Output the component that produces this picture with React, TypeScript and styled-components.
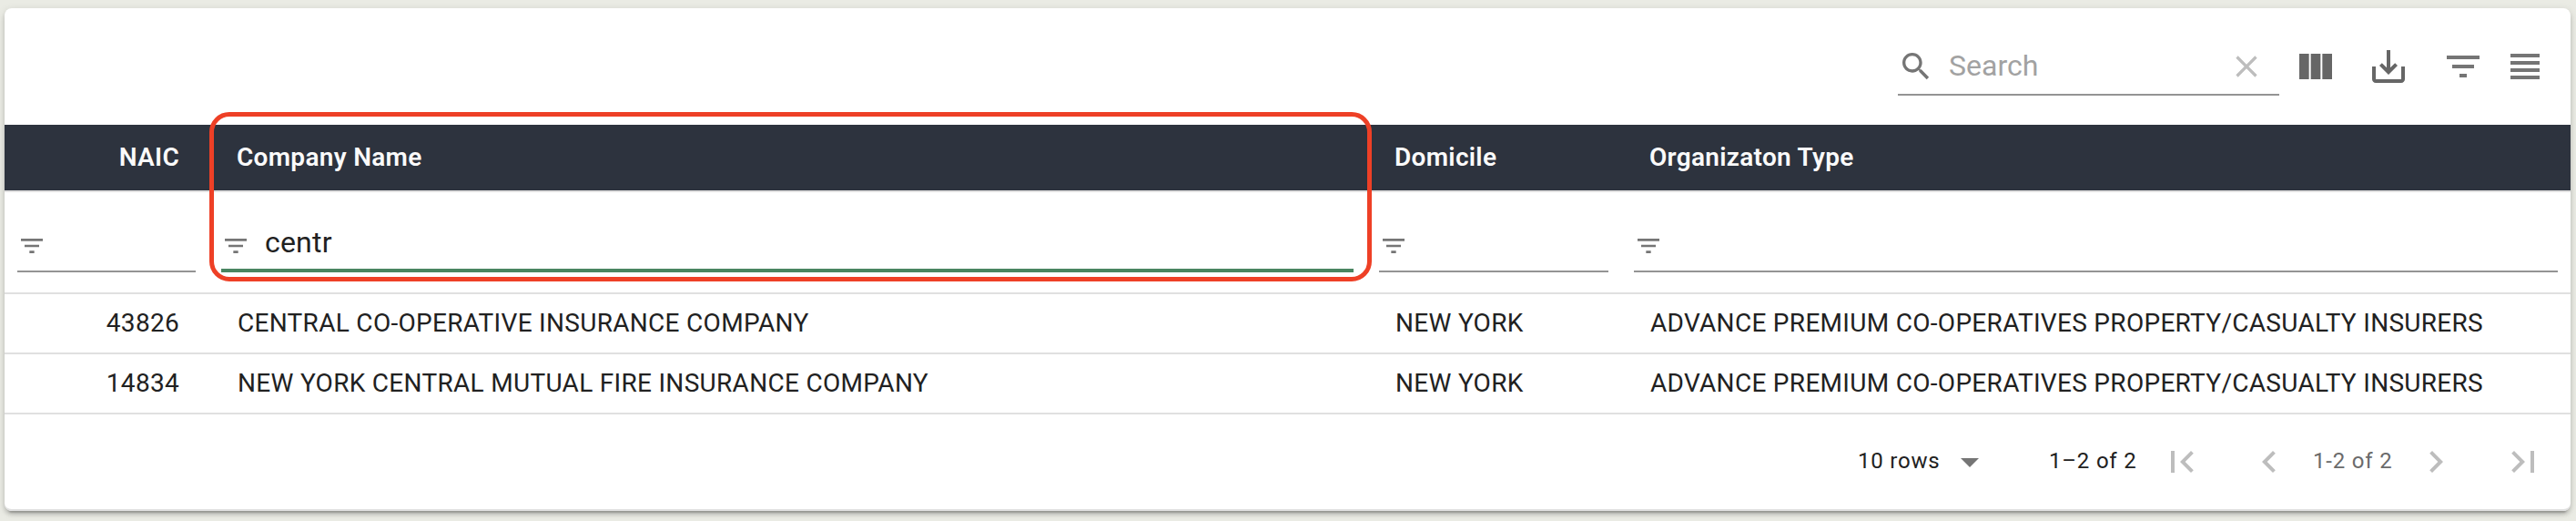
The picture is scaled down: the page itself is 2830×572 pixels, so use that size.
import React from "react";
import styled, { createGlobalStyle, css } from "styled-components";

const GlobalStyle = createGlobalStyle`
  * { box-sizing: border-box; }
  body {
    margin: 0;
    background: #eaebe4;
    font-family: Roboto, "Liberation Sans", sans-serif;
    color: #212121;
    overflow: hidden;
  }
`;

const Page = styled.main`
  width: 2830px;
  height: 572px;
  padding: 9px 6px 11px 5px;
`;

const Card = styled.section`
  position: relative;
  height: 552px;
  display: flex;
  flex-direction: column;
  background: #fff;
  border-radius: 8px;
  box-shadow:
    0 6px 2px -4px rgba(0, 0, 0, 0.2),
    0 4px 4px 0 rgba(0, 0, 0, 0.14),
    0 2px 10px 0 rgba(0, 0, 0, 0.12);
`;

const Toolbar = styled.header`
  height: 128px;
  display: flex;
  justify-content: flex-end;
  align-items: flex-start;
  padding: 40px 26px 0 0;
`;

const SearchField = styled.label`
  width: 419px;
  height: 56px;
  display: flex;
  align-items: flex-start;
  padding-top: 4px;
  margin-right: 16px;
  border-bottom: 2px solid #949494;
`;

const SearchInput = styled.input`
  flex: 1;
  min-width: 0;
  height: 38px;
  margin: 0 0 0 16px;
  padding: 0;
  border: 0;
  outline: 0;
  background: transparent;
  font: 400 32px/38px Roboto, sans-serif;
  color: #212121;
  &::placeholder { color: #a2a2a2; opacity: 1; }
`;

const IconButton = styled.button<{ $tone?: string; $gap?: number }>`
  flex: none;
  display: flex;
  padding: 0;
  border: 0;
  background: none;
  color: ${(p) => p.$tone ?? "#757575"};
  margin-left: ${(p) => p.$gap ?? 0}px;
`;

const Glyph = styled.svg<{ $size: number }>`
  display: block;
  flex: none;
  width: ${(p) => p.$size}px;
  height: ${(p) => p.$size}px;
  fill: currentColor;
`;

const ClearButton = styled(IconButton)`
  margin-right: 16px;
`;

const SearchGlyph = styled(Glyph)`
  color: #757575;
`;

const columns = css`
  display: grid;
  grid-template-columns: 224px 1272px 280px 1fr;
`;

const HeadRow = styled.div`
  ${columns}
  height: 74px;
  background: #2d333e;
  background-clip: padding-box;
  border-bottom: 2px solid #e0e0e0;
`;

const HeadCell = styled.div<{ $right?: boolean }>`
  padding: 0 32px 0 31px;
  font-size: 28px;
  font-weight: 600;
  letter-spacing: 0.3px;
  line-height: 72px;
  color: #fafafa;
  text-align: ${(p) => (p.$right ? "right" : "left")};
`;

const FilterRow = styled.div`
  ${columns}
  height: 112px;
  border-bottom: 2px solid #e0e0e0;
`;

const FilterField = styled.label<{ $focused?: boolean }>`
  height: 88px;
  margin: 0 14px;
  display: flex;
  align-items: flex-end;
  padding-bottom: ${(p) => (p.$focused ? 9 : 11)}px;
  border-bottom: ${(p) => (p.$focused ? "4px solid #498561" : "2px solid #949494")};
  color: #757575;
`;

const FilterInput = styled.input`
  flex: 1;
  min-width: 0;
  height: 38px;
  margin: 0 0 1px 16px;
  padding: 0;
  border: 0;
  outline: 0;
  background: transparent;
  font: 400 32px/38px Roboto, sans-serif;
  letter-spacing: 0.2px;
  color: #212121;
`;

const BodyRow = styled.div`
  ${columns}
  height: 66px;
  border-bottom: 2px solid #e0e0e0;
`;

const BodyCell = styled.div<{ $right?: boolean }>`
  padding: 0 32px;
  font-size: 28px;
  letter-spacing: 0.3px;
  line-height: 64px;
  white-space: nowrap;
  text-align: ${(p) => (p.$right ? "right" : "left")};
`;

const Footer = styled.footer`
  flex: 1;
  display: flex;
  justify-content: flex-end;
  align-items: center;
  padding-right: 28px;
  border-bottom: 2px solid #e0e0e0;
  border-radius: 0 0 8px 8px;
`;

const FooterText = styled.span<{ $muted?: boolean; $width: number; $gap?: number }>`
  width: ${(p) => p.$width}px;
  margin-left: ${(p) => p.$gap ?? 0}px;
  padding-bottom: 2px;
  font-size: 24px;
  letter-spacing: 0.8px;
  line-height: 40px;
  white-space: nowrap;
  color: ${(p) => (p.$muted ? "#6b6b6b" : "#212121")};
`;

const Highlight = styled.div`
  position: absolute;
  left: 225px;
  top: 114px;
  width: 1277px;
  height: 186px;
  border: 5px solid #ee4026;
  border-radius: 22px;
  pointer-events: none;
`;

const paths = {
  search:
    "M15.5 14h-.79l-.28-.27C15.41 12.59 16 11.11 16 9.5 16 5.91 13.09 3 9.5 3S3 5.91 3 9.5 5.91 16 9.5 16c1.61 0 3.09-.59 4.23-1.57l.27.28v.79l5 4.99L20.49 19l-4.99-5zm-6 0C7.01 14 5 11.99 5 9.5S7.01 5 9.5 5 14 7.01 14 9.5 11.99 14 9.5 14z",
  clear:
    "M19 6.41L17.59 5 12 10.59 6.41 5 5 6.41 10.59 12 5 17.59 6.41 19 12 13.41 17.59 19 19 17.59 13.41 12z",
  columns: "M14.67 5v14H9.33V5h5.34zm1 14H21V5h-5.33v14zm-7.34 0V5H3v14h5.33z",
  save:
    "M19 12v7H5v-7H3v7c0 1.1.9 2 2 2h14c1.1 0 2-.9 2-2v-7h-2zm-6 .67l2.59-2.58L17 11.5l-5 5-5-5 1.41-1.41L11 12.67V3h2z",
  filter: "M10 18h4v-2h-4v2zM3 6v2h18V6H3zm3 7h12v-2H6v2z",
  lines: "M4 15h16v-2H4v2zm0 4h16v-2H4v2zm0-8h16V9H4v2zm0-6v2h16V5H4z",
  drop: "M7 10l5 5 5-5z",
  first: "M18.41 16.59L13.82 12l4.59-4.59L17 6l-6 6 6 6zM6 6h2v12H6z",
  prev: "M15.41 7.41L14 6l-6 6 6 6 1.41-1.41L10.83 12z",
  next: "M10 6L8.59 7.41 13.17 12l-4.58 4.59L10 18l6-6z",
  last: "M5.59 7.41L10.18 12l-4.59 4.59L7 18l6-6-6-6zM16 6h2v12h-2z",
};

const Icon = ({ name, size = 48 }: { name: keyof typeof paths; size?: number }) => (
  <Glyph $size={size} viewBox="0 0 24 24">
    <path d={paths[name]} />
  </Glyph>
);

const headers = ["NAIC", "Company Name", "Domicile", "Organizaton Type"];
const filters = ["", "centr", "", ""];
const rows = [
  ["43826", "CENTRAL CO-OPERATIVE INSURANCE COMPANY", "NEW YORK", "ADVANCE PREMIUM CO-OPERATIVES PROPERTY/CASUALTY INSURERS"],
  ["14834", "NEW YORK CENTRAL MUTUAL FIRE INSURANCE COMPANY", "NEW YORK", "ADVANCE PREMIUM CO-OPERATIVES PROPERTY/CASUALTY INSURERS"],
];

export default function App() {
  return (
    <Page>
      <GlobalStyle />
      <Card>
        <Toolbar>
          <SearchField>
            <SearchGlyph $size={40} viewBox="0 0 24 24">
              <path d={paths.search} />
            </SearchGlyph>
            <SearchInput placeholder="Search" />
            <ClearButton $tone="#bdbdbd" aria-label="Clear">
              <Icon name="clear" size={40} />
            </ClearButton>
          </SearchField>
          <IconButton $tone="#666" aria-label="Columns"><Icon name="columns" /></IconButton>
          <IconButton $tone="#666" $gap={32} aria-label="Export"><Icon name="save" /></IconButton>
          <IconButton $gap={34} aria-label="Filters"><Icon name="filter" /></IconButton>
          <IconButton $gap={20} aria-label="Density"><Icon name="lines" /></IconButton>
        </Toolbar>

        <HeadRow>
          {headers.map((h, i) => (
            <HeadCell key={h} $right={i === 0}>{h}</HeadCell>
          ))}
        </HeadRow>
        <FilterRow>
          {filters.map((value, i) => (
            <FilterField key={i} $focused={value !== ""}>
              <Icon name="filter" size={32} />
              <FilterInput defaultValue={value} />
            </FilterField>
          ))}
        </FilterRow>
        {rows.map((row) => (
          <BodyRow key={row[0]}>
            {row.map((cell, i) => (
              <BodyCell key={i} $right={i === 0}>{cell}</BodyCell>
            ))}
          </BodyRow>
        ))}

        <Footer>
          <FooterText $width={99}>10 rows</FooterText>
          <IconButton aria-label="Rows per page"><Icon name="drop" /></IconButton>
          <FooterText $width={122} $gap={63}>1–2 of 2</FooterText>
          <IconButton $tone="#bdbdbd" aria-label="First page"><Icon name="first" /></IconButton>
          <IconButton $tone="#bdbdbd" $gap={48} aria-label="Previous page"><Icon name="prev" /></IconButton>
          <FooterText $muted $width={111} $gap={24}>1-2 of 2</FooterText>
          <IconButton $tone="#bdbdbd" aria-label="Next page"><Icon name="next" /></IconButton>
          <IconButton $tone="#bdbdbd" $gap={48} aria-label="Last page"><Icon name="last" /></IconButton>
        </Footer>
        <Highlight />
      </Card>
    </Page>
  );
}
